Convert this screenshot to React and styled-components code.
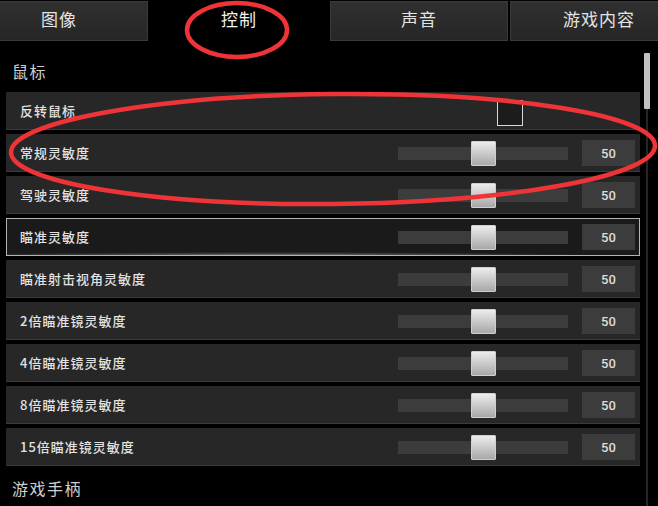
import React from "react";
import styled, { createGlobalStyle } from "styled-components";

const Global = createGlobalStyle`
  html, body { margin: 0; padding: 0; background: #000; overflow: hidden; }
  body { font-family: "Noto Sans CJK SC", "Noto Sans", sans-serif; }
`;

const Page = styled.div`
  position: relative;
  width: 658px;
  height: 506px;
  background: #000;
  overflow: hidden;
`;

const TabBar = styled.div`
  display: flex;
  gap: 2px;
  margin-left: -30px;
  height: 41px;
  padding-top: 1px;
  box-sizing: border-box;
`;

const Tab = styled.div`
  flex: 0 0 178px;
  display: flex;
  align-items: center;
  justify-content: center;
  box-sizing: border-box;
  font-size: 17px;
  letter-spacing: 1px;
  color: ${(p) => (p.$active ? "#f2f2f2" : "#e4e4e4")};
  background: ${(p) => (p.$active ? "#000" : "linear-gradient(#303030, #262626)")};
  border: 1px solid ${(p) => (p.$active ? "#000" : "#3a3a3a")};
  padding-bottom: 5px;
`;

const Body = styled.div`
  display: flex;
  gap: 4px;
`;

const Main = styled.div`
  width: 634px;
  margin-left: 6px;
`;

const SectionTitle = styled.div`
  height: 22px;
  line-height: 22px;
  margin-top: ${(p) => p.$top}px;
  margin-bottom: ${(p) => p.$bottom}px;
  padding-left: 6px;
  font-size: 16px;
  letter-spacing: 1.5px;
  color: #cfcfcf;
`;

const RowList = styled.div`
  display: flex;
  flex-direction: column;
  gap: 4px;
`;

const Row = styled.div`
  height: 38px;
  box-sizing: border-box;
  display: flex;
  align-items: center;
  padding: 0 5px 0 14px;
  background: ${(p) =>
    p.$active
      ? "radial-gradient(ellipse 55% 4px at 42% 100%, #9a9a9a 0%, rgba(120,120,120,0.5) 50%, rgba(27,27,27,0) 100%), #1a1a1a"
      : "#272727"};
  box-shadow: ${(p) =>
    p.$active ? "inset 0 0 0 1px #b4b4b4" : "inset 0 -1px 0 #3b3b3b"};
`;

const Label = styled.div`
  flex: 1;
  font-size: 13px;
  font-weight: 500;
  letter-spacing: 1px;
  color: #e2e2e2;
  padding-bottom: 2px;
`;

const Slider = styled.div`
  width: 170px;
  height: 13px;
  background: #3c3c3c;
  display: flex;
  align-items: center;
  justify-content: center;
`;

const Thumb = styled.div`
  width: 25px;
  height: 25px;
  box-sizing: border-box;
  background: linear-gradient(#ececec, #a8a8a8);
  border: 1px solid #cfcfcf;
  border-radius: 1px;
`;

const ValueBox = styled.div`
  width: 53px;
  height: 26px;
  margin-left: 14px;
  background: #3c3c3c;
  display: flex;
  align-items: center;
  justify-content: center;
  font-family: "Liberation Sans Narrow", "Roboto", sans-serif;
  font-weight: 500;
  font-size: 13px;
  color: #dedede;
`;

const Checkbox = styled.div`
  width: 26px;
  height: 26px;
  box-sizing: border-box;
  margin-right: 112px;
  margin-top: 3px;
  background: #1c1c1c;
  border: 1.5px solid #d8d8d8;
`;

const ScrollTrack = styled.div`
  width: 6px;
  height: 465px;
  margin-top: 12px;
  background: linear-gradient(to right, transparent 2px, #262626 2px, #262626 4px, transparent 4px);
`;

const ScrollThumb = styled.div`
  height: 56px;
  background: #c2c2c2;
  border-radius: 1px;
`;

const Marks = styled.svg`
  position: absolute;
  left: 0;
  top: 0;
  pointer-events: none;
`;

const sliders = [
  "常规灵敏度",
  "驾驶灵敏度",
  "瞄准灵敏度",
  "瞄准射击视角灵敏度",
  "2倍瞄准镜灵敏度",
  "4倍瞄准镜灵敏度",
  "8倍瞄准镜灵敏度",
  "15倍瞄准镜灵敏度",
];

export default function App() {
  return (
    <Page>
      <Global />
      <TabBar>
        <Tab>图像</Tab>
        <Tab $active>控制</Tab>
        <Tab>声音</Tab>
        <Tab>游戏内容</Tab>
      </TabBar>
      <Body>
        <Main>
          <SectionTitle $top={19} $bottom={10}>鼠标</SectionTitle>
          <RowList>
            <Row>
              <Label>反转鼠标</Label>
              <Checkbox />
            </Row>
            {sliders.map((s) => (
              <Row key={s} $active={s === "瞄准灵敏度"}>
                <Label>{s}</Label>
                <Slider>
                  <Thumb />
                </Slider>
                <ValueBox>50</ValueBox>
              </Row>
            ))}
          </RowList>
          <SectionTitle $top={11} $bottom={0}>游戏手柄</SectionTitle>
        </Main>
        <ScrollTrack>
          <ScrollThumb />
        </ScrollTrack>
      </Body>
      <Marks width="658" height="506" viewBox="0 0 658 506">
        <ellipse cx="237" cy="30" rx="50" ry="27" fill="none" stroke="#ef3438" strokeWidth="4.5" />
        <ellipse
          cx="333"
          cy="149"
          rx="322"
          ry="55"
          fill="none"
          stroke="#ef3438"
          strokeWidth="4.5"
          transform="rotate(-0.6 333 149)"
        />
      </Marks>
    </Page>
  );
}
